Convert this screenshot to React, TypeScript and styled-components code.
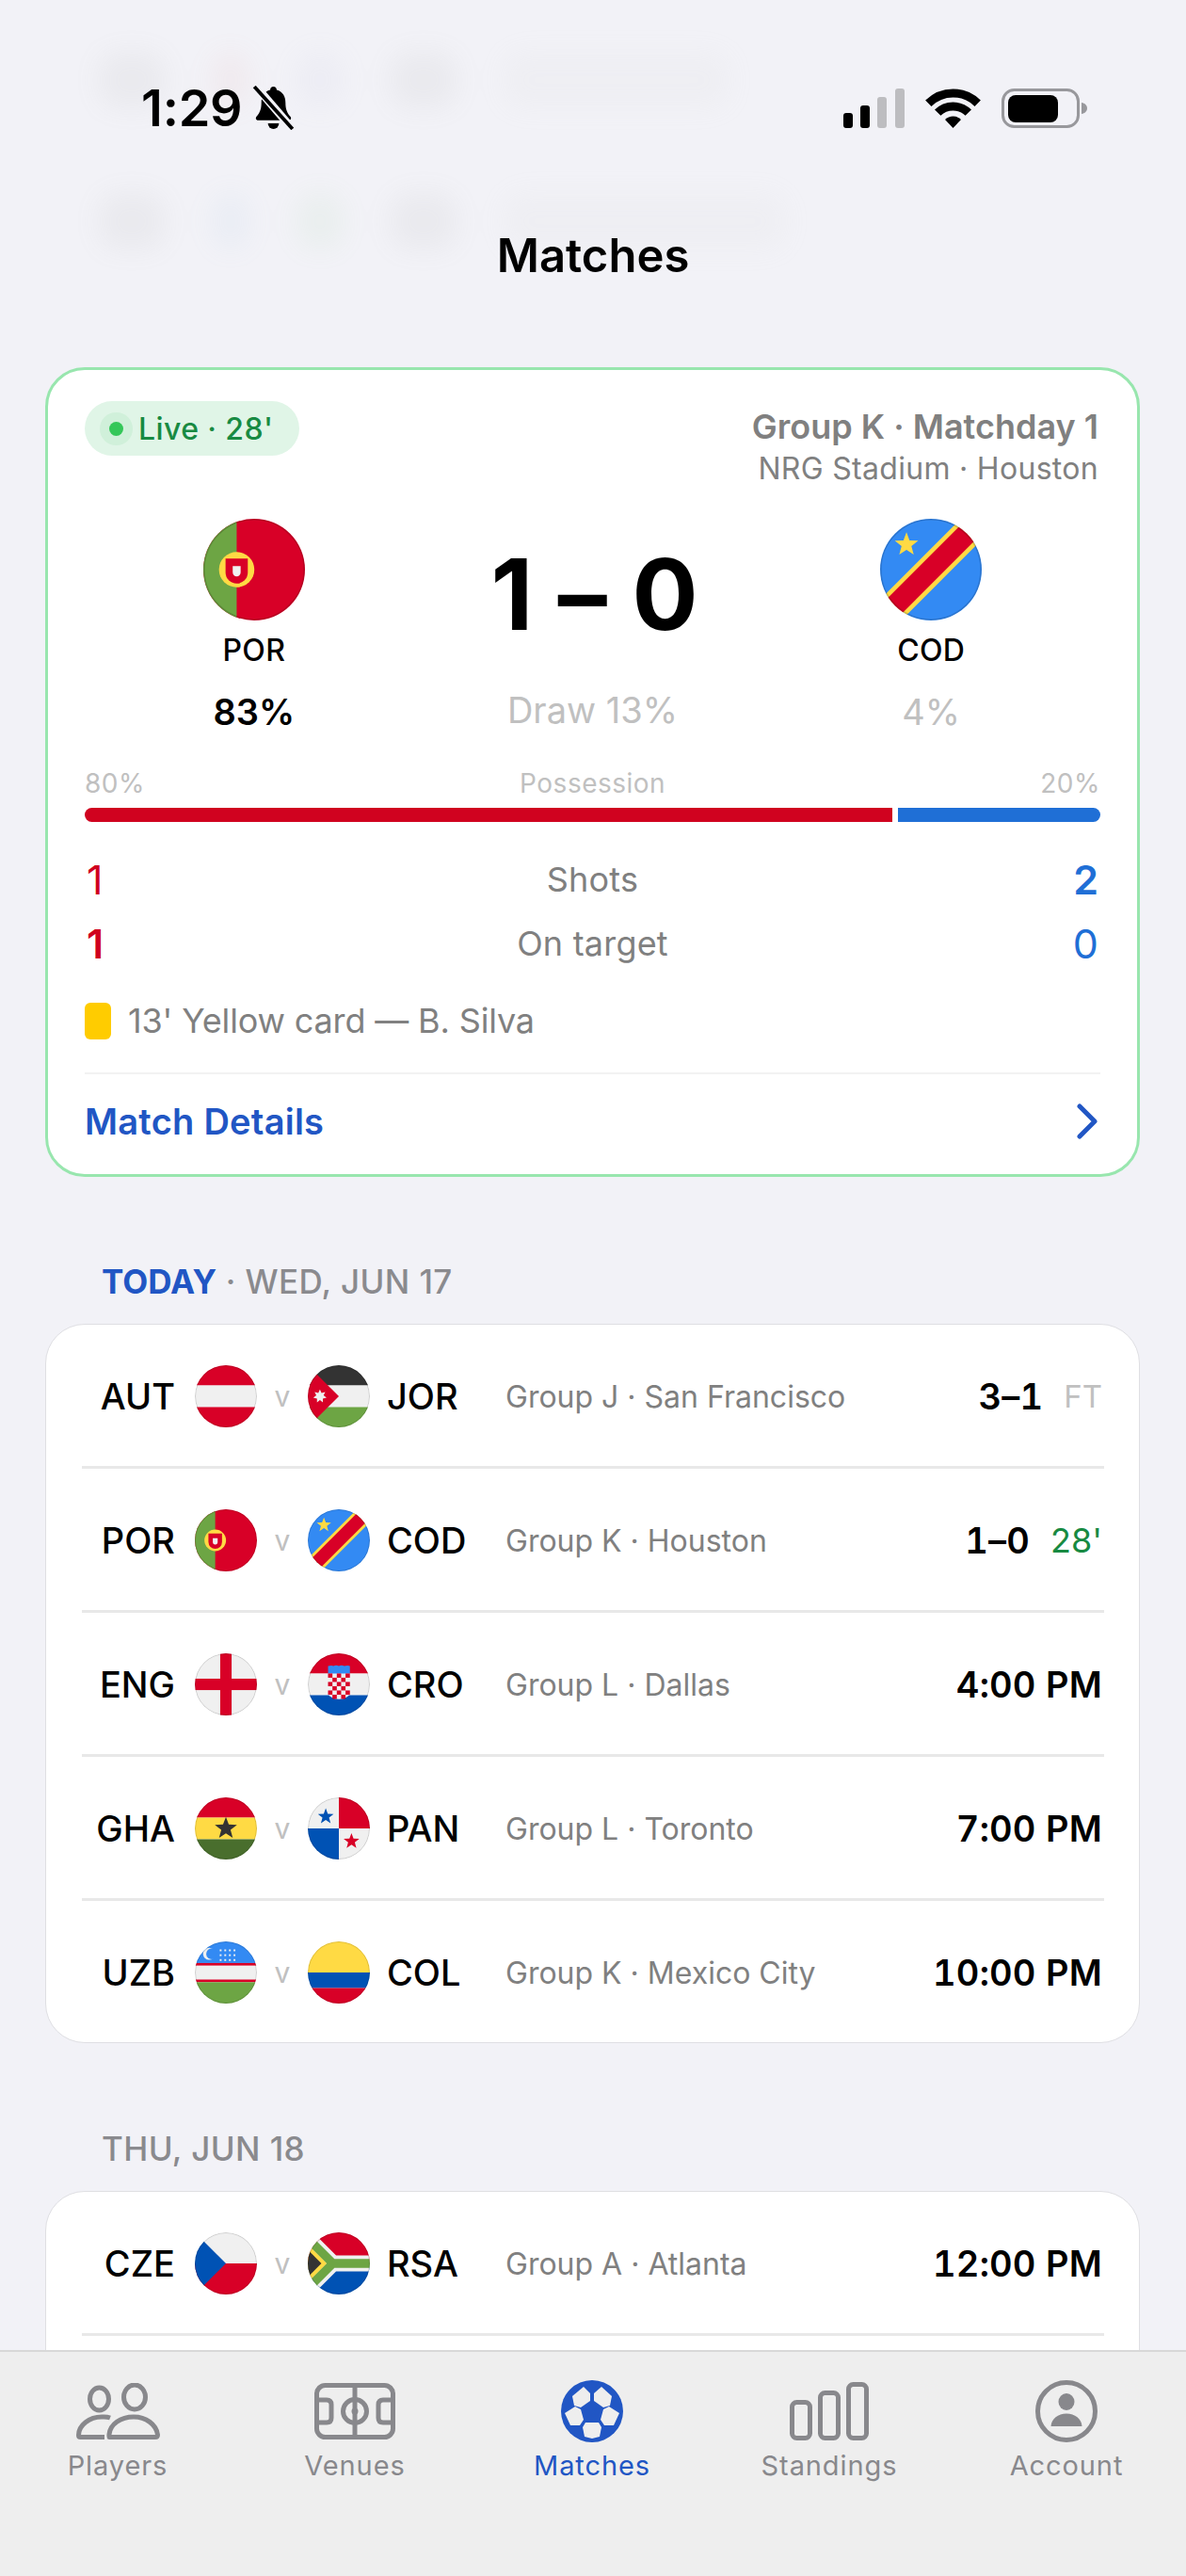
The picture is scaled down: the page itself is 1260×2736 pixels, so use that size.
import React from 'react';
import styled, { createGlobalStyle } from 'styled-components';

const RED = '#D80027';
const WHITE = '#F0F0F0';
const GREEN = '#6DA544';
const BLUE = '#338AF3';
const NAVY = '#0052B4';
const YELLOW = '#FFDA44';
const DARK = '#333333';

const GlobalStyle = createGlobalStyle`
  html, body {
    margin: 0;
    padding: 0;
    background: #f2f2f7;
    font-family: Inter, "Liberation Sans", sans-serif;
  }
`;

const Screen = styled.div`
  position: relative;
  width: 1260px;
  height: 2736px;
  overflow: hidden;
  background: #f2f2f7;
  color: #000;
`;

const Backdrop = styled.div`
  position: absolute;
  top: 0;
  left: 105px;
  width: 1100px;
  display: flex;
  flex-direction: column;
  gap: 60px;
  padding-top: 40px;
  filter: blur(14px);
  opacity: 0.09;
`;

const BackdropRow = styled.div`
  display: flex;
  align-items: center;
  gap: 50px;
  height: 90px;
`;

const Smudge = styled.div<{ $w: number; $c: string }>`
  width: ${p => p.$w}px;
  height: 60px;
  border-radius: 20px;
  background: ${p => p.$c};
`;

const Header = styled.header`
  position: relative;
  height: 390px;
`;

const StatusBar = styled.div`
  display: flex;
  justify-content: space-between;
  align-items: center;
  height: 229px;
  padding: 0 104px 0 150px;
  box-sizing: border-box;
`;

const StatusLeft = styled.div`
  display: flex;
  align-items: center;
  gap: 11px;
`;

const Clock = styled.span`
  font-size: 54px;
  font-weight: 600;
  letter-spacing: -0.2px;
  line-height: 60px;
`;

const StatusRight = styled.div`
  display: flex;
  align-items: center;
  gap: 22px;
`;

const Title = styled.h1`
  margin: 13px 0 0;
  font-size: 49px;
  line-height: 60px;
  font-weight: 600;
  text-align: center;
`;

const Content = styled.main`
  padding: 0 49px 0 48px;
`;

const HeroCard = styled.section`
  height: 860px;
  box-sizing: border-box;
  background: #fff;
  border: 3px solid #98e6ae;
  border-radius: 42px;
  padding: 33px 39px 0;
`;

const HeroTop = styled.div`
  display: flex;
  justify-content: space-between;
  align-items: flex-start;
  height: 125px;
`;

const LivePill = styled.div`
  display: flex;
  align-items: center;
  gap: 6px;
  height: 58px;
  width: 228px;
  box-sizing: border-box;
  padding-left: 16px;
  border-radius: 29px;
  background: #e0f5e7;
  color: #188a42;
  font-size: 32px;
  font-weight: 500;
  letter-spacing: 0.4px;
`;

const LiveDot = styled.span`
  width: 15px;
  height: 15px;
  border-radius: 50%;
  background: #34c759;
  box-shadow: 0 0 0 10px #d0f0da;
  margin: 0 10px 0 10px;
`;

const Meta = styled.div`
  padding: 5px 2px 0 0;
  text-align: right;
  color: #808080;
`;

const MetaStrong = styled.div`
  font-size: 36px;
  line-height: 44px;
  font-weight: 600;
`;

const MetaLight = styled.div`
  font-size: 32px;
  line-height: 46px;
  letter-spacing: 0.3px;
`;

const Teams = styled.div`
  display: grid;
  grid-template-columns: repeat(3, 1fr);
  text-align: center;
`;

const TeamCol = styled.div`
  display: flex;
  flex-direction: column;
  align-items: center;
`;

const HeroCode = styled.div`
  margin-top: 10px;
  font-size: 32px;
  line-height: 44px;
  font-weight: 500;
  letter-spacing: 0.3px;
`;

const Pct = styled.div<{ $strong?: boolean }>`
  margin-top: 21px;
  font-size: 38px;
  line-height: 44px;
  font-weight: ${p => (p.$strong ? 600 : 400)};
  color: ${p => (p.$strong ? '#000' : '#c0c0c0')};
`;

const Score = styled.div`
  height: 160px;
  margin-left: 5px;
  font-size: 104px;
  line-height: 160px;
  font-weight: 700;
  letter-spacing: 1px;
  white-space: pre;
`;

const PossessionLabels = styled.div`
  display: flex;
  justify-content: space-between;
  margin-top: 37px;
  font-size: 28px;
  line-height: 34px;
  letter-spacing: 0.5px;
  color: #c0c0c0;
`;

const Bar = styled.div`
  display: flex;
  gap: 6px;
  height: 15px;
  margin-top: 9px;
`;

const BarPart = styled.div<{ $share: number; $c: string; $side: 'l' | 'r' }>`
  flex: ${p => p.$share};
  background: ${p => p.$c};
  border-radius: ${p => (p.$side === 'l' ? '8px 0 0 8px' : '0 8px 8px 0')};
`;

const StatList = styled.div`
  margin-top: 27px;
`;

const StatRow = styled.div`
  display: flex;
  justify-content: space-between;
  align-items: center;
  height: 68px;
`;

const StatLabel = styled.span`
  font-size: 36px;
  letter-spacing: 0.2px;
  color: #808080;
`;

const StatValue = styled.span<{ $c: string; $strong?: boolean; $left?: boolean }>`
  width: 60px;
  padding: ${p => (p.$left ? '0 0 0 2px' : '0 2px 0 0')};
  box-sizing: border-box;
  font-size: 43px;
  font-weight: ${p => (p.$strong ? 600 : 400)};
  color: ${p => p.$c};
  text-align: ${p => (p.$left ? 'left' : 'right')};
`;

const CardEvent = styled.div`
  display: flex;
  align-items: center;
  gap: 18px;
  height: 40px;
  margin-top: 28px;
  font-size: 36px;
  letter-spacing: -0.15px;
  color: #808080;
`;

const YellowCard = styled.span`
  width: 28px;
  height: 39px;
  border-radius: 6px;
  background: #ffcc00;
`;

const DetailsRow = styled.div`
  display: flex;
  justify-content: space-between;
  align-items: center;
  height: 100px;
  margin-top: 35px;
  padding-right: 2px;
  border-top: 2px solid #f2f2f2;
  color: #2156c4;
  font-size: 38px;
  font-weight: 600;
  letter-spacing: 0.25px;
`;

const SectionTitle = styled.h2<{ $first?: boolean }>`
  margin: ${p => (p.$first ? '89px' : '90px')} 0 23px;
  padding-left: 60px;
  font-size: 35px;
  line-height: 44px;
  font-weight: 500;
  letter-spacing: 0.4px;
  color: #8a8a8e;
`;

const Today = styled.span`
  color: #2156c4;
  font-weight: 700;
  letter-spacing: 0;
`;

const ListCard = styled.section`
  background: #fff;
  border: 1px solid #dfdfe3;
  border-radius: 42px;
`;

const Row = styled.div`
  display: flex;
  align-items: center;
  box-sizing: border-box;
  height: 153px;
  margin: 0 37px 0 38px;
  padding: 2px 2px 0 0;
  border-bottom: 3px solid #e8e8e8;

  &:last-child {
    border-bottom: none;
    height: 150px;
  }
`;

const HomeCode = styled.span`
  width: 99px;
  margin-right: 21px;
  font-size: 38px;
  font-weight: 500;
  text-align: right;
`;

const Versus = styled.span`
  width: 54px;
  font-size: 30px;
  color: #c0c0c0;
  text-align: center;
`;

const AwayCode = styled.span`
  padding-left: 18px;
  box-sizing: border-box;
  width: 144px;
  font-size: 38px;
  font-weight: 500;
`;

const Info = styled.span`
  flex: 1;
  font-size: 32px;
  color: #808080;
`;

const Result = styled.div`
  display: flex;
  align-items: center;
  gap: 22px;
`;

const Strong = styled.span`
  font-size: 38px;
  font-weight: 600;
  letter-spacing: 0.2px;
  font-variant-numeric: tabular-nums;
`;

const State = styled.span<{ $live?: boolean }>`
  font-size: ${p => (p.$live ? '36px' : '33px')};
  color: ${p => (p.$live ? '#188a42' : '#c0c0c0')};
`;

const TabBar = styled.nav`
  position: absolute;
  left: -1px;
  right: 0;
  bottom: 0;
  height: 240px;
  box-sizing: border-box;
  display: grid;
  grid-template-columns: repeat(5, 252px);
  padding-top: 30px;
  background: #eeeeee;
  border-top: 2px solid #d8d8d8;
`;

const Tab = styled.div<{ $active?: boolean }>`
  display: flex;
  flex-direction: column;
  align-items: center;
  color: ${p => (p.$active ? '#2156c4' : '#88888c')};
`;

const TabIcon = styled.div`
  display: flex;
  align-items: center;
  justify-content: center;
  height: 66px;
`;

const TabLabel = styled.span`
  margin-top: 5px;
  font-size: 29px;
  line-height: 40px;
  font-weight: 400;
  letter-spacing: 0.9px;
`;

const FlagSvg = styled.svg<{ $size: number }>`
  display: block;
  flex: none;
  width: ${p => p.$size}px;
  height: ${p => p.$size}px;
  border-radius: 50%;
`;

function starPoints(cx: number, cy: number, r: number, n = 5, inner = 0.42) {
  const pts: string[] = [];
  for (let i = 0; i < n * 2; i++) {
    const a = (Math.PI * i) / n - Math.PI / 2;
    const rad = i % 2 === 0 ? r : r * inner;
    pts.push(`${(cx + rad * Math.cos(a)).toFixed(1)},${(cy + rad * Math.sin(a)).toFixed(1)}`);
  }
  return pts.join(' ');
}

const Bands = ({ colors, stops }: { colors: string[]; stops: number[] }) => (
  <>
    {colors.map((c, i) => (
      <rect key={i} x="0" y={stops[i]} width="512" height={stops[i + 1] - stops[i]} fill={c} />
    ))}
  </>
);

const FLAGS: Record<string, React.ReactNode> = {
  AUT: <Bands colors={[RED, WHITE, RED]} stops={[0, 167, 345, 512]} />,
  JOR: (
    <>
      <Bands colors={[DARK, WHITE, GREEN]} stops={[0, 167, 345, 512]} />
      <polygon points="0,0 75,75 256,256 75,437 0,512" fill={RED} />
      <polygon points={starPoints(100, 256, 56, 7, 0.55)} fill={WHITE} />
    </>
  ),
  POR: (
    <>
      <rect width="512" height="512" fill={RED} />
      <rect width="168" height="512" fill={GREEN} />
      <circle cx="168" cy="256" r="89" fill={YELLOW} />
      <path d="M112 200H224V270a56 56 0 0 1-112 0Z" fill={RED} />
      <path d="M148 238H188V270a20 20 0 0 1-40 0Z" fill={WHITE} />
    </>
  ),
  COD: (
    <>
      <rect width="512" height="512" fill={BLUE} />
      <path d="M0 512L512 0" stroke={YELLOW} strokeWidth="150" />
      <path d="M0 512L512 0" stroke={RED} strokeWidth="106" />
      <polygon points={starPoints(133, 130, 62)} fill={YELLOW} />
    </>
  ),
  ENG: (
    <>
      <rect width="512" height="512" fill={WHITE} />
      <rect x="209" width="94" height="512" fill={RED} />
      <rect y="209" width="512" height="94" fill={RED} />
    </>
  ),
  CRO: (
    <>
      <Bands colors={[RED, WHITE, NAVY]} stops={[0, 167, 345, 512]} />
      <path d="M167 104q30-8 45 0q22-10 44 0q22-10 44 0q30-8 47 0V170H167Z" fill={BLUE} />
      <path d="M167 166H347V320a90 58 0 0 1-180 0Z" fill={WHITE} />
      {[0, 1, 2, 3, 4].flatMap(c =>
        [0, 1, 2, 3, 4, 5].map(r =>
          (c + r) % 2 === 0 ? (
            <rect key={`${c}-${r}`} x={167 + c * 36} y={166 + r * 35} width="36" height="35" fill={RED} />
          ) : null
        )
      )}
    </>
  ),
  GHA: (
    <>
      <Bands colors={[RED, YELLOW, '#496E2D']} stops={[0, 167, 345, 512]} />
      <polygon points={starPoints(256, 256, 96)} fill={DARK} />
    </>
  ),
  PAN: (
    <>
      <rect width="512" height="512" fill={WHITE} />
      <rect x="256" width="256" height="256" fill={RED} />
      <rect y="256" width="256" height="256" fill={NAVY} />
      <polygon points={starPoints(148, 158, 68)} fill={NAVY} />
      <polygon points={starPoints(360, 362, 68)} fill={RED} />
    </>
  ),
  UZB: (
    <>
      <Bands
        colors={[BLUE, RED, WHITE, RED, GREEN]}
        stops={[0, 178, 200, 314, 336, 512]}
      />
      <circle cx="118" cy="102" r="50" fill={WHITE} />
      <circle cx="140" cy="102" r="46" fill={BLUE} />
      {[66, 106, 146].flatMap((y, r) =>
        [0, 1, 2, 3].map(c => (
          <rect key={`${r}-${c}`} x={205 + c * 38} y={y} width="15" height="15" fill={WHITE} />
        ))
      )}
    </>
  ),
  COL: <Bands colors={[YELLOW, NAVY, RED]} stops={[0, 256, 384, 512]} />,
  CZE: (
    <>
      <Bands colors={[WHITE, RED]} stops={[0, 256, 512]} />
      <polygon points="0,0 75,75 256,256 75,437 0,512" fill={NAVY} />
    </>
  ),
  RSA: (
    <>
      <Bands colors={[RED, NAVY]} stops={[0, 256, 512]} />
      <path d="M0 51L205 256L0 461M205 256H512" fill="none" stroke={WHITE} strokeWidth="133" />
      <path d="M0 51L205 256L0 461M205 256H512" fill="none" stroke={GREEN} strokeWidth="73" />
      <polygon points="0,101 155,256 0,411" fill={YELLOW} />
      <polygon points="0,144 112,256 0,368" fill={DARK} />
    </>
  ),
};

const Flag = ({ code, size = 66 }: { code: string; size?: number }) => (
  <FlagSvg $size={size} viewBox="0 0 512 512">
    {FLAGS[code]}
    <circle cx="256" cy="256" r="252" fill="none" stroke="rgba(0,0,0,0.16)" strokeWidth="7" />
  </FlagSvg>
);

const BellSlash = () => (
  <svg width="45" height="47" viewBox="0 0 42 44">
    <path
      d="M21 1c-2 0-3.200 1.400-3.200 3.200C11.500 5.800 9 11 9 17c0 6-1.500 10-5 14-1 1.400-.5 3.500 1.800 3.500h30.400c2.300 0 2.800-2.100 1.800-3.500-3.500-4-5-8-5-14 0-6-2.500-11.200-8.800-12.800C24.200 2.400 23 1 21 1Z"
      fill="#000"
    />
    <path d="M15.500 37.500h11a5.500 5.500 0 0 1-11 0Z" fill="#000" />
    <path d="M3 0L39 42" stroke="#f3f3f8" strokeWidth="8" />
    <path d="M2 1L40 43" stroke="#000" strokeWidth="3.600" />
  </svg>
);

const SignalIcon = () => (
  <svg width="65" height="42" viewBox="0 0 65 42">
    <rect x="0" y="26" width="10" height="16" rx="3" fill="#000" />
    <rect x="18" y="18" width="10" height="24" rx="3" fill="#000" />
    <rect x="36" y="9" width="10" height="33" rx="3" fill="#bdbdc0" />
    <rect x="55" y="0" width="10" height="42" rx="3" fill="#bdbdc0" />
  </svg>
);

const WifiIcon = () => (
  <svg width="59" height="42" viewBox="0 0 59 42">
    <path d="M3.300 15.800A37 37 0 0 1 55.700 15.800" fill="none" stroke="#000" strokeWidth="9" />
    <path d="M13.200 25.700A23 23 0 0 1 45.800 25.700" fill="none" stroke="#000" strokeWidth="9" />
    <path d="M29.500 42L21 33A12 12 0 0 1 38 33Z" fill="#000" />
  </svg>
);

const BatteryIcon = () => (
  <svg width="92" height="42" viewBox="0 0 92 42">
    <rect x="1.500" y="1.500" width="80" height="39" rx="12" fill="none" stroke="#98989c" strokeWidth="3" />
    <rect x="7" y="7" width="53" height="29" rx="8" fill="#000" />
    <path d="M85 15c3.500 .5 6 3 6 6s-2.500 5.500-6 6Z" fill="#98989c" />
  </svg>
);

const ChevronIcon = () => (
  <svg width="24" height="38" viewBox="0 0 24 38">
    <path d="M4 3L20 19L4 35" fill="none" stroke="#2156c4" strokeWidth="5" strokeLinecap="round" strokeLinejoin="round" />
  </svg>
);

const PlayersIcon = () => (
  <svg width="89" height="60" viewBox="0 0 89 60" fill="none" stroke="currentColor" strokeWidth="5">
    <ellipse cx="24.500" cy="17" rx="10" ry="12" />
    <ellipse cx="62" cy="15" rx="11.500" ry="13" />
    <path d="M36 37C32 35.500 29 36 27 36C14 36 2.500 45 2.500 55.500C2.500 56.800 3.200 57.500 4.500 57.500H30" strokeLinecap="butt" />
    <path d="M36 57.500C34.500 57.500 35.500 57.500 36 57.500H84C86 57.500 86.500 56.500 86.500 55C85 44 74 36 61 36C47 36 36 44 35 54.500C34.800 56.500 35 57.500 36 57.500Z" />
  </svg>
);

const VenuesIcon = () => (
  <svg width="86" height="60" viewBox="0 0 86 60" fill="none" stroke="currentColor" strokeWidth="5">
    <rect x="2.500" y="2.500" width="81" height="55" rx="9" />
    <path d="M43 2.500V57.500" />
    <circle cx="43" cy="30" r="12.500" />
    <circle cx="43" cy="30" r="3.500" fill="currentColor" stroke="none" />
    <path d="M2.500 18H13C16.500 18 18 20 18 23V37C18 40 16.500 42 13 42H2.500" />
    <path d="M83.500 18H73C69.500 18 68 20 68 23V37C68 40 69.500 42 73 42H83.500" />
  </svg>
);

const BallIcon = () => (
  <svg width="66" height="66" viewBox="0 0 66 66">
    <circle cx="33" cy="33" r="33" fill="currentColor" />
    <g fill="#eeeeee">
      <polygon points="12,17 24,7 31,14 31,22 21,29 14,27" />
      <polygon points="54,17 43,7 35,14 35,22 45,29 52,27" />
      <polygon points="4,35 15,28 21,31 24,42 20,48 10,48" />
      <polygon points="62,35 51,28 45,31 42,42 46,48 56,48" />
      <polygon points="23,50 26,45 40,45 43,50 41,60 33,62 25,60" />
    </g>
  </svg>
);

const StandingsIcon = () => (
  <svg width="84" height="62" viewBox="0 0 84 62" fill="none" stroke="currentColor" strokeWidth="5">
    <rect x="2.500" y="21.500" width="19" height="38" rx="5" />
    <rect x="32.500" y="11.500" width="19" height="48" rx="5" />
    <rect x="62.500" y="2.500" width="19" height="57" rx="5" />
  </svg>
);

const AccountIcon = () => (
  <svg width="66" height="66" viewBox="0 0 66 66">
    <circle cx="33" cy="33" r="30.500" fill="none" stroke="currentColor" strokeWidth="5" />
    <ellipse cx="33" cy="23" rx="8.500" ry="9" fill="currentColor" />
    <path d="M16.500 49C17 41 24 35.500 33 35.500C42 35.500 49 41 49.500 49Z" fill="currentColor" />
  </svg>
);

type Match = {
  home: string;
  away: string;
  info: string;
  score?: string;
  state?: string;
  live?: boolean;
  time?: string;
};

const today: Match[] = [
  { home: 'AUT', away: 'JOR', info: 'Group J · San Francisco', score: '3–1', state: 'FT' },
  { home: 'POR', away: 'COD', info: 'Group K · Houston', score: '1–0', state: "28'", live: true },
  { home: 'ENG', away: 'CRO', info: 'Group L · Dallas', time: '4:00 PM' },
  { home: 'GHA', away: 'PAN', info: 'Group L · Toronto', time: '7:00 PM' },
  { home: 'UZB', away: 'COL', info: 'Group K · Mexico City', time: '10:00 PM' },
];

const MatchRow = ({ m }: { m: Match }) => (
  <Row>
    <HomeCode>{m.home}</HomeCode>
    <Flag code={m.home} />
    <Versus>v</Versus>
    <Flag code={m.away} />
    <AwayCode>{m.away}</AwayCode>
    <Info>{m.info}</Info>
    <Result>
      <Strong>{m.time ?? m.score}</Strong>
      {m.state && <State $live={m.live}>{m.state}</State>}
    </Result>
  </Row>
);

export default function App() {
  return (
    <Screen>
      <GlobalStyle />
      <Backdrop>
        <BackdropRow>
          <Smudge $w={70} $c="#999" />
          <Smudge $w={40} $c="#d99" />
          <Smudge $w={50} $c="#b9b9d9" />
          <Smudge $w={70} $c="#999" />
          <Smudge $w={240} $c="#ccc" />
        </BackdropRow>
        <BackdropRow>
          <Smudge $w={70} $c="#999" />
          <Smudge $w={40} $c="#9bd" />
          <Smudge $w={50} $c="#9c9" />
          <Smudge $w={70} $c="#999" />
          <Smudge $w={300} $c="#ccc" />
        </BackdropRow>
      </Backdrop>

      <Header>
        <StatusBar>
          <StatusLeft>
            <Clock>1:29</Clock>
            <BellSlash />
          </StatusLeft>
          <StatusRight>
            <SignalIcon />
            <WifiIcon />
            <BatteryIcon />
          </StatusRight>
        </StatusBar>
        <Title>Matches</Title>
      </Header>

      <Content>
        <HeroCard>
          <HeroTop>
            <LivePill>
              <LiveDot />
              <span>Live · 28'</span>
            </LivePill>
            <Meta>
              <MetaStrong>Group K · Matchday 1</MetaStrong>
              <MetaLight>NRG Stadium · Houston</MetaLight>
            </Meta>
          </HeroTop>

          <Teams>
            <TeamCol>
              <Flag code="POR" size={108} />
              <HeroCode>POR</HeroCode>
              <Pct $strong>83%</Pct>
            </TeamCol>
            <TeamCol>
              <Score>1 – 0</Score>
              <Pct>Draw 13%</Pct>
            </TeamCol>
            <TeamCol>
              <Flag code="COD" size={108} />
              <HeroCode>COD</HeroCode>
              <Pct>4%</Pct>
            </TeamCol>
          </Teams>

          <PossessionLabels>
            <span>80%</span>
            <span>Possession</span>
            <span>20%</span>
          </PossessionLabels>
          <Bar>
            <BarPart $share={80} $c="#d0021f" $side="l" />
            <BarPart $share={20} $c="#1f6fd6" $side="r" />
          </Bar>

          <StatList>
            <StatRow>
              <StatValue $c="#d0021f" $left>1</StatValue>
              <StatLabel>Shots</StatLabel>
              <StatValue $c="#1f6fd6" $strong>2</StatValue>
            </StatRow>
            <StatRow>
              <StatValue $c="#d0021f" $left $strong>1</StatValue>
              <StatLabel>On target</StatLabel>
              <StatValue $c="#1f6fd6">0</StatValue>
            </StatRow>
          </StatList>

          <CardEvent>
            <YellowCard />
            <span>13' Yellow card — B. Silva</span>
          </CardEvent>

          <DetailsRow>
            <span>Match Details</span>
            <ChevronIcon />
          </DetailsRow>
        </HeroCard>

        <SectionTitle $first>
          <Today>TODAY</Today> · WED, JUN 17
        </SectionTitle>
        <ListCard>
          {today.map(m => (
            <MatchRow key={m.home} m={m} />
          ))}
        </ListCard>

        <SectionTitle>THU, JUN 18</SectionTitle>
        <ListCard>
          <MatchRow m={{ home: 'CZE', away: 'RSA', info: 'Group A · Atlanta', time: '12:00 PM' }} />
          <Row />
        </ListCard>
      </Content>

      <TabBar>
        <Tab>
          <TabIcon><PlayersIcon /></TabIcon>
          <TabLabel>Players</TabLabel>
        </Tab>
        <Tab>
          <TabIcon><VenuesIcon /></TabIcon>
          <TabLabel>Venues</TabLabel>
        </Tab>
        <Tab $active>
          <TabIcon><BallIcon /></TabIcon>
          <TabLabel>Matches</TabLabel>
        </Tab>
        <Tab>
          <TabIcon><StandingsIcon /></TabIcon>
          <TabLabel>Standings</TabLabel>
        </Tab>
        <Tab>
          <TabIcon><AccountIcon /></TabIcon>
          <TabLabel>Account</TabLabel>
        </Tab>
      </TabBar>
    </Screen>
  );
}
